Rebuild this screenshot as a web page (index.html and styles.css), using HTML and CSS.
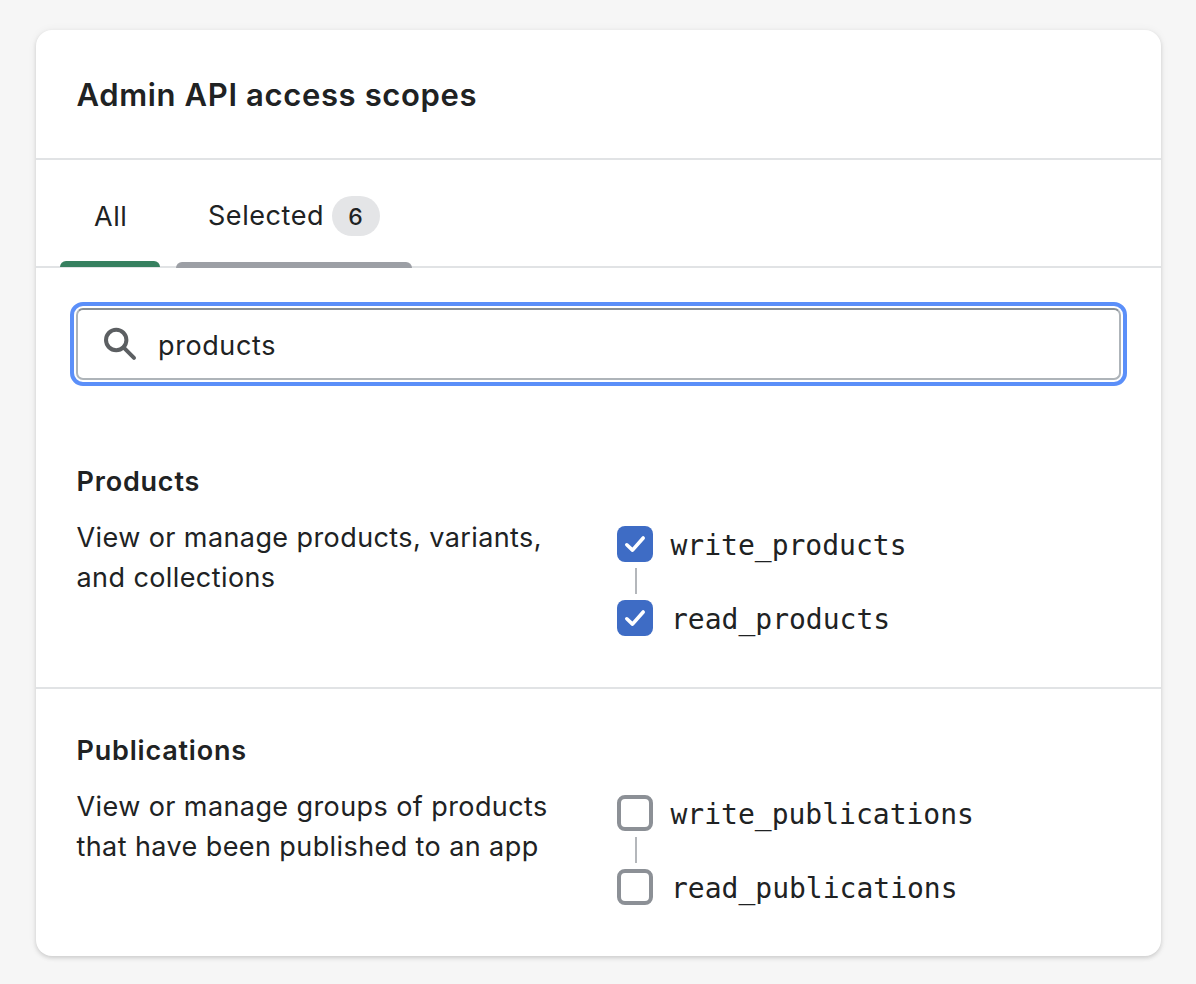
FILE: index.html
```html
<!DOCTYPE html>
<html lang="en">
<head>
<meta charset="utf-8">
<title>Admin API access scopes</title>
<link rel="stylesheet" href="styles.css">
</head>
<body>
<main class="card">
  <header class="card-header"><h1>Admin API access scopes</h1></header>
  <nav class="tabs">
    <a class="tab tab-active"><span>All</span></a>
    <a class="tab tab-hover"><span class="tab-label">Selected</span><span class="badge">6</span></a>
  </nav>
  <div class="search">
    <svg class="search-icon" viewBox="0 0 34 34" fill="none" stroke="#5c5f62" stroke-width="4"><circle cx="12.200" cy="13" r="10.200"/><path d="M19.500 20.300 30 30.800" stroke-linecap="round"/></svg>
    <span class="query">products</span>
  </div>
  <section class="group">
    <div class="about">
      <h2>Products</h2>
      <p>View or manage products, variants,<br>and collections</p>
    </div>
    <div class="scopes">
      <div class="scope"><span class="box checked"><svg viewBox="0 0 36 36"><path d="m9.800 18.800 5.700 5.300L26.200 12" fill="none" stroke="#fff" stroke-width="3.6" stroke-linecap="round" stroke-linejoin="round"/></svg></span><code>write_products</code></div>
      <i class="link"></i>
      <div class="scope"><span class="box checked"><svg viewBox="0 0 36 36"><path d="m9.800 18.800 5.700 5.300L26.200 12" fill="none" stroke="#fff" stroke-width="3.6" stroke-linecap="round" stroke-linejoin="round"/></svg></span><code class="read">read_products</code></div>
    </div>
  </section>
  <section class="group last">
    <div class="about">
      <h2>Publications</h2>
      <p>View or manage groups of products<br>that have been published to an app</p>
    </div>
    <div class="scopes">
      <div class="scope"><span class="box"></span><code>write_publications</code></div>
      <i class="link"></i>
      <div class="scope"><span class="box"></span><code class="read">read_publications</code></div>
    </div>
  </section>
</main>
</body>
</html>
```
FILE: styles.css
```css
* { box-sizing: border-box; }
body { margin: 0; padding: 30px 35px 28px 36px; height: 984px; background: #f6f6f6; color: #202223; font-family: Inter, sans-serif; }
.card { height: 926px; background: #fff; border-radius: 16px; box-shadow: 0 0 10px rgba(23,24,24,.05), 0 2px 4px rgba(0,0,0,.15); }
.card-header { height: 130px; padding: 41px 40.500px 0; border-bottom: 2px solid #e1e3e5; }
h1 { margin: 0; font-size: 31px; line-height: 48px; font-weight: 600; letter-spacing: .64px; }
.tabs { display: flex; gap: 16px; height: 108px; padding-left: 24px; border-bottom: 2px solid #e1e3e5; }
.tab { display: flex; align-items: center; height: 108px; padding: 4px 0 0 34px; font-size: 27px; position: relative; letter-spacing: .5px; }
.tab::after { content: ""; position: absolute; left: 0; right: 0; bottom: 0; height: 6px; border-radius: 6px 6px 0 0; background: #9c9fa5; }
.tab-active { width: 100px; }
.tab-active::after { bottom: 1px; background: #36805f; }
.tab-hover { width: 236px; padding-left: 32px; }
.tab-label { width: 116px; padding-bottom: 2px; letter-spacing: .55px; }
.badge { display: flex; align-items: center; justify-content: center; width: 48px; height: 40px; padding: 2px 1px 0 0; margin-left: 8px; border-radius: 20px; background: #e4e5e7; font-size: 23px; font-weight: 500; letter-spacing: 0; }
.search { display: flex; align-items: center; height: 72px; margin: 40px 40px 0; padding-left: 26px; border: 2px solid #aeb4b9; border-top-color: #898f94; border-radius: 7px; outline: 4px solid #5b8ff9; outline-offset: 2px; }
.search-icon { width: 34px; height: 34px; }
.query { margin: 2px 0 0 20px; font-size: 27px; letter-spacing: .6px; }
.group { display: flex; height: 309px; padding: 82px 41px 0 40.500px; border-bottom: 2px solid #e1e3e5; }
.last { height: 268px; padding-top: 42px; border: 0; }
.about { width: 540.500px; }
h2 { margin: 0; font-size: 27px; line-height: 40px; font-weight: 600; letter-spacing: .8px; }
p { margin: 16px 0 0; font-size: 27px; line-height: 40px; letter-spacing: .41px; white-space: nowrap; }
.scopes { padding-top: 64px; }
.scope { display: flex; align-items: center; height: 36px; }
.box { width: 36px; height: 36px; border: 4px solid #8c9096; border-radius: 8px; }
.checked { border: 0; background: #3e6cc5; }
.box svg { display: block; }
code { margin: 4px 0 0 17.500px; font: 28px/36px "DejaVu Sans Mono", monospace; }
.read { margin-left: 18px; }
.link { display: block; width: 2px; height: 26px; margin: 6px 0 6px 18px; background: #b4b7bb; }
```
